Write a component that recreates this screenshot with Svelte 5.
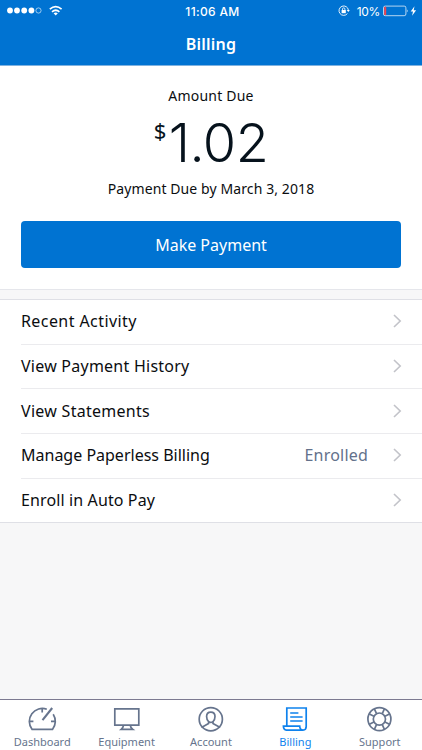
<script>
    let active = 'Billing';

    const rows = [
        { label: 'Recent Activity', spacing: 0.42 },
        { label: 'View Payment History', spacing: 0.24 },
        { label: 'View Statements', spacing: 0.28 },
        { label: 'Manage Paperless Billing', value: 'Enrolled', spacing: 0 },
        { label: 'Enroll in Auto Pay', spacing: 0.12 }
    ];

    const tabs = ['Dashboard', 'Equipment', 'Account', 'Billing', 'Support'];
</script>

<div class="screen">
    <header>
        <div class="status">
            <div class="signal">
                <svg width="62" height="14" viewBox="0 0 62 14" fill="#fff">
                    <circle cx="3" cy="6.5" r="2.9" />
                    <circle cx="10" cy="6.5" r="2.9" />
                    <circle cx="17.2" cy="6.5" r="2.9" />
                    <circle cx="24.4" cy="6.5" r="2.9" />
                    <circle cx="31.5" cy="6.5" r="2.6" fill="none" stroke="#fff" stroke-width=".6" />
                    <g fill="none" stroke="#fff" stroke-width="1.7">
                        <path d="M42.8 5.2q5.9-5 11.8 0" />
                        <path d="M45 7.8q3.7-3.1 7.4 0" />
                    </g>
                    <path d="M46.6 9.2q2.1-1.6 4.2 0l-2.1 2.2z" />
                </svg>
            </div>
            <span class="time">11:06 AM</span>
            <div class="power">
                <svg class="lock" width="12" height="12" viewBox="0 0 12 12" fill="none" stroke="#fff">
                    <path d="M9.4 8.6A4.7 4.7 0 1 1 10.4 5.2" stroke-width=".9" />
                    <path d="M8.7 5h3.1l-1.5 2z" fill="#fff" stroke="none" />
                    <path d="M3.6 5h4.2v3.2H3.6z" fill="#fff" stroke="none" />
                    <path d="M4.5 5.2V4a1.2 1.2 0 0 1 2.4 0v1.2" stroke-width=".8" />
                </svg>
                <span>10%</span>
                <svg class="battery" width="35" height="12" viewBox="0 0 35 12">
                    <rect x=".5" y="1.1" width="22.4" height="9.6" rx="1.7" fill="none" stroke="#fff" stroke-width=".7" />
                    <rect x="1.2" y="1.8" width="2" height="8.2" rx=".6" fill="#f5444c" />
                    <path d="M23.9 4.2q1.5 1.7 0 3.4z" fill="#fff" />
                    <path d="M31.5 1.2l-3.8 5.3h2.3l-.9 4.2 4-5.4h-2.4z" fill="#fff" />
                </svg>
            </div>
        </div>
        <h1>Billing</h1>
    </header>

    <section class="summary">
        <p class="caption">Amount Due</p>
        <p class="amount"><span class="currency">$</span><span>1.02</span></p>
        <p class="due">Payment Due by March 3, 2018</p>
        <button class="pay">Make Payment</button>
    </section>

    <ul class="rows">
        {#each rows as row}
            <li>
                <span style="letter-spacing: {row.spacing}px">{row.label}</span>
                {#if row.value}
                    <span class="value">{row.value}</span>
                {/if}
                <svg class="chevron" width="9" height="14" viewBox="0 0 9 14">
                    <path d="M1 1l6.2 6L1 13" fill="none" stroke="#c2c3c9" stroke-width="1.6" />
                </svg>
            </li>
        {/each}
    </ul>

    <nav>
        {#each tabs as tab}
            <button class="tab" class:active={tab === active} on:click={() => (active = tab)}>
                <svg width="30" height="28" viewBox="0 0 30 28" fill="none" stroke="currentColor" stroke-width="1.7">
                    {#if tab === 'Dashboard'}
                        <path d="M19.8 4.2A13 13 0 0 0 5 24.3h20.6A13 13 0 0 0 26.2 9.3" />
                        <path d="M25.2 3l-9.7 12.2" stroke-width="2.1" />
                        <path d="M15.2 3.4v4M2.4 16.3h4M24 16.3h4" />
                    {:else if tab === 'Equipment'}
                        <path d="M2.8 3.8h24v16.4h-24z" />
                        <path d="M11.5 20.4q-.3 2.3-2.3 4h11.6q-2.3-1.7-2.5-4" />
                    {:else if tab === 'Account'}
                        <circle cx="14.8" cy="14.2" r="11.6" />
                        <path d="M14.8 7.2c-2.5 0-4.2 1.7-4.2 4.4 0 2.3.8 4 2 5v2l-5.8 3.2q-.7.4-.9 1M14.8 7.2c2.5 0 4.2 1.7 4.2 4.4 0 2.3-.8 4-2 5v2l5.8 3.2q.7.4.9 1" />
                        <path d="M12.6 16.6q2.2 1.7 4.4 0" />
                    {:else if tab === 'Billing'}
                        <path d="M6.8 21V3h19.4v18.5q0 3.4-3.2 3.7" />
                        <path d="M23 25.2H6.4q-3-.3-3-4.1h16.3q.2 4 3.3 4.1z" />
                        <path d="M10.2 8h8.2M10.2 12h12.4M10.2 16h12.4" />
                    {:else}
                        <circle cx="14.4" cy="14.1" r="11.5" />
                        <circle cx="14.4" cy="14.1" r="6.1" />
                        <path d="M9.4 3.8l2 4.6M4.4 9l4.5 2.3M19.4 3.8l-2 4.6M24.4 9l-4.5 2.3M4.4 19.2l4.5-2.3M9.4 24.4l2-4.6M24.4 19.2l-4.5-2.3M19.4 24.4l-2-4.6" />
                    {/if}
                </svg>
                <span>{tab}</span>
            </button>
        {/each}
    </nav>
</div>

<style>
    :global(body) {
        margin: 0;
    }
    .screen {
        display: flex;
        flex-direction: column;
        width: 422px;
        height: 750px;
        box-sizing: border-box;
        background: #f7f7f8;
        color: #0b0d10;
        font-family: "Noto Sans", sans-serif;
    }
    header {
        height: 65px;
        background: #0073d2;
        border-bottom: 1px solid #7fb2e0;
        color: #fff;
    }
    .status {
        display: grid;
        grid-template-columns: 1fr auto 1fr;
        align-items: center;
        height: 22px;
        padding: 0 4px 0 7px;
        font-family: Inter, sans-serif;
        font-size: 12px;
    }
    .signal, .power, .status svg {
        display: flex;
    }
    .time {
        font-weight: 500;
        letter-spacing: 0.35px;
    }
    .power {
        justify-content: flex-end;
        align-items: center;
        letter-spacing: -0.3px;
    }
    .lock {
        margin-right: 7px;
    }
    .battery {
        margin-left: 3px;
    }
    h1 {
        margin: 10px 0 0;
        font-size: 16px;
        line-height: 24px;
        font-weight: 600;
        letter-spacing: 0.2px;
        text-align: center;
    }
    .summary {
        display: flex;
        flex-direction: column;
        align-items: center;
        height: 223px;
        padding: 0 21px;
        background: #fff;
        border-bottom: 1px solid #e5e6eb;
    }
    p {
        margin: 0;
    }
    .caption, .due {
        font-size: 14px;
        line-height: 20px;
    }
    .caption {
        margin-top: 20px;
        letter-spacing: 0.2px;
    }
    .amount {
        display: flex;
        height: 64px;
        margin-top: 8px;
        font-family: Inter, sans-serif;
        font-size: 54px;
        font-weight: 300;
        line-height: 58px;
        letter-spacing: -0.5px;
        color: #06121c;
    }
    .currency {
        margin-right: 3px;
        font-family: "Noto Sans", sans-serif;
        font-size: 22px;
        font-weight: 400;
        line-height: 33px;
    }
    .due {
        margin-top: 1px;
        letter-spacing: 0.1px;
    }
    .pay {
        width: 100%;
        height: 47px;
        margin-top: 22px;
        border: none;
        border-radius: 4px;
        background: #0073d2;
        color: #fff;
        font: 16px "Noto Sans", sans-serif;
    }
    .rows {
        margin: 9px 0 0;
        padding: 0;
        list-style: none;
        background: #fff;
        border-top: 1px solid #dfe0e6;
        border-bottom: 1px solid #dfe0e6;
    }
    li {
        display: flex;
        align-items: center;
        height: 44.7px;
        box-sizing: border-box;
        margin-left: 21px;
        padding-right: 20px;
        padding-bottom: 1px;
        border-bottom: 1px solid #ebebee;
        font-size: 16px;
    }
    li:last-child {
        height: 43.2px;
        padding-bottom: 0;
        border-bottom: none;
    }
    .value {
        margin-left: auto;
        margin-right: 25px;
        color: #63718b;
        letter-spacing: 0.2px;
    }
    .chevron {
        margin-left: auto;
    }
    .value + .chevron {
        margin-left: 0;
    }
    nav {
        display: grid;
        grid-template-columns: repeat(5, 1fr);
        height: 50px;
        margin-top: auto;
        background: #fff;
        border-top: 1px solid #7c7a91;
    }
    .tab {
        display: flex;
        flex-direction: column;
        align-items: center;
        padding: 5px 0 0;
        border: none;
        background: none;
        color: #66748d;
        font: 11px/18px "Noto Sans", sans-serif;
    }
    .tab.active {
        color: #0f82ed;
    }
</style>
